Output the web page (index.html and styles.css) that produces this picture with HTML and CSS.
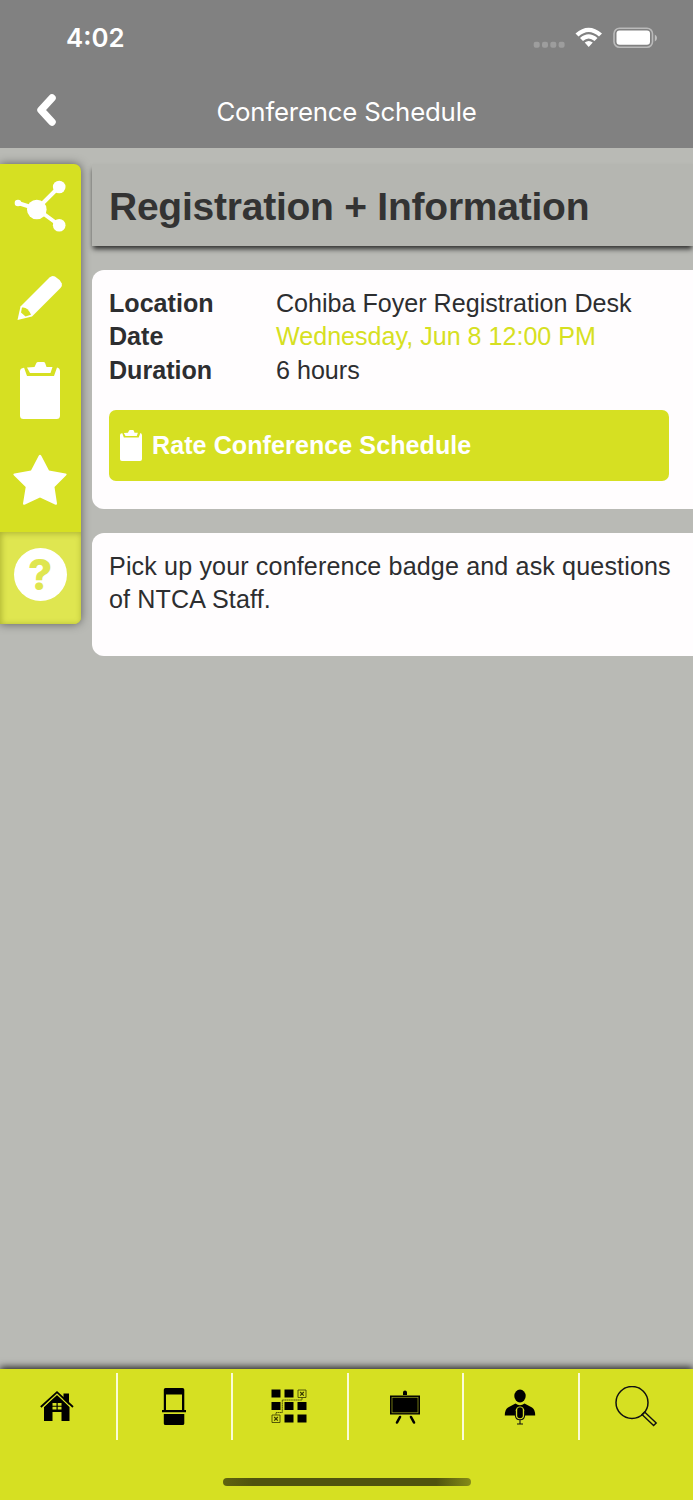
FILE: index.html
```html
<!DOCTYPE html>
<html lang="en">
<head>
  <meta charset="UTF-8">
  <title>Conference Schedule</title>
  <link rel="stylesheet" href="styles.css">
</head>
<body>
  <svg width="0" height="0" class="defs">
    <symbol id="clipboard" viewBox="0 0 40 57">
      <path d="M3.500 6 Q0 6 0 9.500 V53.500 Q0 57 3.500 57 H36.500 Q40 57 40 53.500 V9.500 Q40 6 37 5.500 L34 14 H7 L4 5.500Z M14.500 5 L16.500 .8 Q17 0 18 0 H23.500 Q24.500 0 25 .8 L26.500 5 H32.500 L30.500 11 H10 L7 5.500Z"/>
    </symbol>
  </svg>

  <header>
    <div class="status-bar">
      <span class="time">4:02</span>
      <svg class="status-icons" width="124" height="24" viewBox="0 0 124 24" fill="#fff">
        <g opacity=".22">
          <rect x=".7" y="15.700" width="6" height="6" rx="2"/>
          <rect x="9" y="15.700" width="6" height="6" rx="2"/>
          <rect x="17.300" y="15.700" width="6" height="6" rx="2"/>
          <rect x="25.600" y="15.700" width="6" height="6" rx="2"/>
        </g>
        <path d="M42.500 7.500 Q55.500 -4 69 7.500 L66 10.500 Q55.500 1.500 45.500 10.500Z M47 12 Q55.500 4.500 64.500 12 L61.500 15 Q55.500 10 50 15Z M51.700 16.500 Q55.700 13.500 59.800 16.500 L55.700 21Z"/>
        <rect x="81" y="2.200" width="38.500" height="19" rx="5.500" fill="none" stroke="#fff" stroke-width="1.600" opacity=".45"/>
        <rect x="83.500" y="4.500" width="33.500" height="14.300" rx="3"/>
        <path d="M121.800 8.500 Q124 9.500 124 12 T121.800 15.500Z" opacity=".5"/>
      </svg>
    </div>
    <div class="nav-bar">
      <svg class="back" width="20" height="32" viewBox="0 0 20 32"><path d="M16 4 L5 16 L16 28"/></svg>
      <h1>Conference Schedule</h1>
    </div>
  </header>

  <main>
    <aside class="toolbar">
      <a class="tool">
        <svg width="81" height="92" viewBox="0 0 81 92">
          <path d="M18 39 L37 45 L59 23 M37 45 L59 61" fill="none" stroke="#fff" stroke-width="4"/>
          <circle cx="18" cy="39" r="3.300"/><circle cx="36.800" cy="45.500" r="9.800"/>
          <circle cx="59.200" cy="23" r="6.300"/><circle cx="59.200" cy="61.300" r="6.300"/>
        </svg>
      </a>
      <a class="tool">
        <svg width="81" height="92" viewBox="0 0 81 92">
          <path d="M17.500 64 L20.500 50.500 L49.500 21.500 Q52 19 55 20.500 Q59.500 23 61.800 27.500 Q62.500 30 60.500 32 L32 60.500Z"/>
          <path class="cut" d="M22 51.500 Q27.500 50.500 31 58.800 L25.500 60.500 L21 56.500Z"/>
        </svg>
      </a>
      <a class="tool"><svg class="clip" width="40" height="57"><use href="#clipboard"/></svg></a>
      <a class="tool">
        <svg width="81" height="92" viewBox="0 0 81 92">
          <path d="M38.700 15.800 Q40 13.800 41.300 15.800 L49 30.500 L65.500 33.500 Q67.500 34 66 35.500 L54.500 47 L57 63.500 Q57 65.500 55 64.500 L40 57.500 L25 64.500 Q23 65.500 23 63.500 L25.700 47 L14 35.500 Q12.500 34 14.500 33.500 L31 30.500Z"/>
        </svg>
      </a>
      <a class="tool help"><span class="help-icon">?</span></a>
    </aside>

    <section class="content">
      <h2>Registration + Information</h2>
      <div class="card details">
        <dl>
          <dt>Location</dt><dd>Cohiba Foyer Registration Desk</dd>
          <dt>Date</dt><dd class="date">Wednesday, Jun 8 12:00 PM</dd>
          <dt>Duration</dt><dd>6 hours</dd>
        </dl>
        <a class="rate-button">
          <svg width="22" height="31" viewBox="0 0 40 57" preserveAspectRatio="none"><use href="#clipboard"/></svg>
          Rate Conference Schedule
        </a>
      </div>
      <div class="card description">
        <p>Pick up your conference badge and ask questions of NTCA Staff.</p>
      </div>
    </section>
  </main>

  <footer>
    <nav class="tabs">
      <a>
        <svg width="36" height="40" viewBox="0 0 36 40">
          <path d="M23.500 6.500 H29 V18 L23.500 12.500Z M4 20 L17 8 L29.500 20 V34 H21.500 V25 H12.500 V34 H4Z"/>
          <path d="M.8 20 L17 5.200 L33 20" fill="none" stroke="#000" stroke-width="1.800"/>
          <path d="M2.800 20.500 L17 7.300 L31 20.500" fill="none" stroke="#d6e022" stroke-width=".9"/>
          <path class="cut" d="M12.500 16 H16.500 V18.700 H12.500Z M17.700 16 H21.500 V18.700 H17.700Z M12.500 19.800 H16.500 V22.500 H12.500Z M17.700 19.800 H21.500 V22.500 H17.700Z"/>
        </svg>
      </a>
      <a>
        <svg width="26" height="40" viewBox="0 0 26 40">
          <path fill-rule="evenodd" d="M4.500 1 H21.500 Q23.300 1 23.300 2.800 V23 H25 V25.300 H1 V23 H2.800 V2.800 Q2.800 1 4.500 1Z M5 7.500 V23 H21 V7.500Z M2.800 27 H23.300 V36.500 Q23.300 38 21.500 38 H4.500 Q2.800 38 2.800 36.500Z"/>
        </svg>
      </a>
      <a>
        <svg width="36" height="40" viewBox="0 0 36 40">
          <path d="M.5 2.500 H9.500 V10.500 H.5Z M13.500 2.500 H22.500 V10.500 H13.500Z M.5 15 H9.500 V23 H.5Z M13.500 15 H22.500 V23 H13.500Z M26.500 15 H35.500 V23 H26.500Z M13.500 27.500 H22.500 V35.500 H13.500Z M26.500 27.500 H35.500 V35.500 H26.500Z"/>
          <g fill="none" stroke="#343600" stroke-width=".8">
            <path d="M27 3 H35 V10.500 H27Z M1 28 H9 V35.500 H1Z"/>
            <path d="M29.200 5 L32.800 8.600 M32.800 5 L29.200 8.600 M3.200 30 L6.800 33.600 M6.800 30 L3.200 33.600" stroke-width="1.200"/>
            <path d="M31 10.500 V13 H11.300 V25.500 H5 V28" stroke-dasharray="1.500 .3"/>
          </g>
        </svg>
      </a>
      <a>
        <svg width="32" height="40" viewBox="0 0 32 40">
          <path d="M14 8 V5.500 Q14 3.500 16 3.500 T18 5.500 V8Z M1 8.500 H31 V27.500 H1Z"/>
          <rect x="3" y="10.300" width="26" height="15.500" fill="none" stroke="#9da41c" stroke-width=".7"/>
          <path d="M11 30 L8 35.500 M22 30 L25 35.500" fill="none" stroke="#000" stroke-width="2.600" stroke-linecap="round"/>
        </svg>
      </a>
      <a>
        <svg width="32" height="40" viewBox="0 0 32 40">
          <ellipse cx="16" cy="9" rx="5.700" ry="6.500"/>
          <path d="M.8 28.500 Q.8 22.500 4 20.500 L11.500 16.500 Q16 20 20.500 16.500 L28 20.500 Q31.200 22.500 31.200 28.500Z"/>
          <rect x="11.600" y="19.500" width="8.800" height="12.500" rx="4.400" fill="#d6e022"/>
          <rect x="13.200" y="20.300" width="5.600" height="11" rx="2.800"/>
          <path d="M11.300 24 V27.500 Q11.300 32.800 16 32.800 T20.700 27.500 V24 M16 33 V36.500 M13 37 H19" fill="none" stroke="#111" stroke-width="1.100"/>
        </svg>
      </a>
      <a>
        <svg width="44" height="42" viewBox="0 0 44 42" fill="none" stroke="#111" stroke-width="1.500">
          <circle cx="18" cy="16.500" r="16"/>
          <path d="M28 28.500 L30.600 26 L42.200 37 L39.600 39.600Z" stroke-width="1.400"/>
        </svg>
      </a>
    </nav>
    <div class="home-indicator"></div>
  </footer>
</body>
</html>
```

FILE: styles.css
```css
* {
  box-sizing: border-box;
}

body {
  margin: 0;
  height: 1500px;
  display: flex;
  flex-direction: column;
  overflow: hidden;
  background: #b9bab5;
  color: #2d2e30;
  font-family: "Liberation Sans", Arial, sans-serif;
  font-size: 25.1px;
  line-height: 33.4px;
}

svg {
  display: block;
  flex: none;
}

.defs {
  position: absolute;
}

.cut {
  fill: #d6e022;
}

header {
  height: 148px;
  background: #818181;
  color: #fff;
  font-family: Inter, sans-serif;
}

.status-bar {
  height: 76px;
  padding: 0 36px 0 66px;
  display: flex;
  justify-content: space-between;
  align-items: center;
}

.time {
  font-size: 25.8px;
  font-weight: 600;
}

.nav-bar {
  height: 72px;
  display: grid;
  grid-template-columns: 72px 1fr 72px;
  align-items: center;
}

.back {
  margin-left: 36px;
  margin-top: -4px;
  fill: none;
  stroke: #fff;
  stroke-width: 7.5;
  stroke-linecap: round;
  stroke-linejoin: round;
}

h1 {
  margin: 0;
  text-align: center;
  font-size: 25.8px;
  font-weight: 400;
  letter-spacing: -0.2px;
}

main {
  flex: 1;
  padding-top: 16px;
  display: flex;
  align-items: flex-start;
  gap: 11.5px;
}

.toolbar {
  width: 80.5px;
  flex: none;
  border-radius: 0 7px 7px 0;
  background: #d6e022;
  box-shadow: 0 0 10px rgba(0, 0, 0, 0.5);
  overflow: hidden;
}

.tool {
  display: flex;
  justify-content: center;
  height: 92px;
  fill: #fff;
}

.clip {
  margin: 14px 1px 0 0;
}

.help {
  background: #dfe650;
  box-shadow: inset 1px 1px 6px rgba(90, 95, 0, 0.4);
}

.help-icon {
  width: 53px;
  height: 53px;
  margin-top: 16px;
  border-radius: 50%;
  background: #fff;
  color: #dfe650;
  font-family: Inter, sans-serif;
  font-size: 42px;
  font-weight: 800;
  line-height: 53px;
  text-align: center;
}

.content {
  flex: 1;
}

h2 {
  height: 82px;
  margin: 0 0 24px;
  padding-left: 17px;
  background: #b5b6b1;
  box-shadow: 0 4px 5px -1px rgba(0, 0, 0, 0.75);
  color: #333;
  font-size: 39px;
  line-height: 85px;
  letter-spacing: -0.24px;
  white-space: nowrap;
}

.card {
  padding: 17px;
  background: #fffdfe;
  border-radius: 12px 0 0 12px;
}

.details {
  height: 239px;
  margin-bottom: 24px;
  padding-right: 24px;
}

dl {
  margin: 0 0 23px;
  display: grid;
  grid-template-columns: 167px 1fr;
}

dt {
  font-weight: bold;
}

dd {
  margin: 0;
  white-space: nowrap;
}

.date {
  color: #d6e022;
}

.rate-button {
  height: 71px;
  padding-left: 11px;
  display: flex;
  align-items: center;
  gap: 10px;
  border-radius: 7px;
  background: #d6e022;
  color: #fff;
  fill: #fff;
  font-weight: bold;
  letter-spacing: 0.06px;
}

.description {
  height: 123px;
}

.description p {
  margin: 0;
  letter-spacing: 0.14px;
}

footer {
  height: 131px;
  background: #d6e022;
  box-shadow: 0 -2px 7px rgba(0, 0, 0, 0.8);
}

.tabs {
  padding-top: 4px;
  display: grid;
  grid-template-columns: repeat(6, 1fr);
}

.tabs a {
  height: 67px;
  display: flex;
  align-items: center;
  justify-content: center;
}

.tabs a + a {
  padding-right: 1px;
  border-left: 2px solid #fafbd8;
}

.home-indicator {
  width: 248px;
  height: 8px;
  margin: 38px auto 0;
  border-radius: 4px;
  background: linear-gradient(90deg, #60640f, #50530e 12%, #50530e 86%, #858b18);
}
```
